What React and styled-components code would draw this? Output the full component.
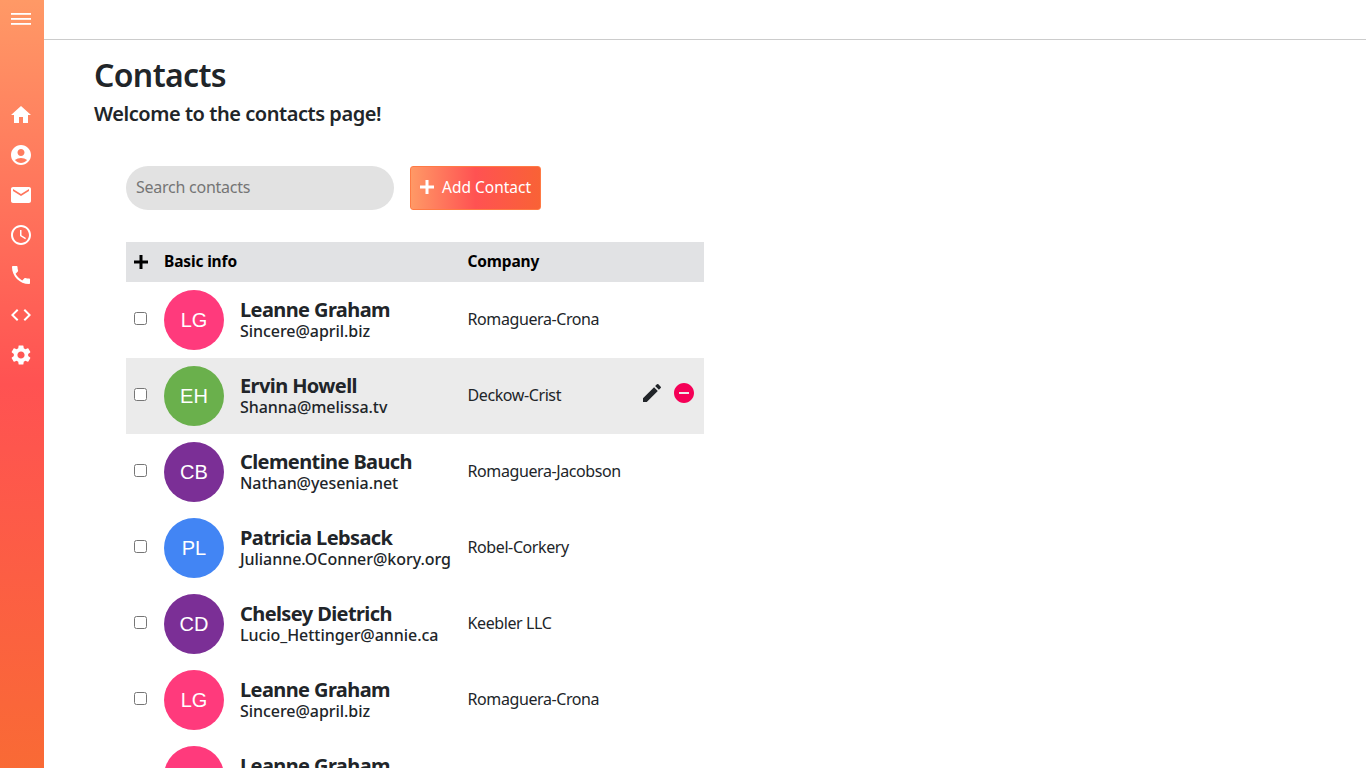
import React from "react";
import styled, { createGlobalStyle } from "styled-components";
import { MdHome, MdAccountCircle, MdEmail, MdAccessTime, MdPhone, MdCode, MdSettings, MdEdit, MdRemoveCircle } from "react-icons/md";

const Global = createGlobalStyle`
  html, body { margin: 0; padding: 0; height: 100%; overflow: hidden; background: #fff; }
  body { font-family: "Noto Sans", "Open Sans", sans-serif; color: #212529; }
`;
const Shell = styled.div`display: flex; height: 768px; overflow: hidden;`;
const Sidebar = styled.nav`
  width: 44px; flex: none; display: flex; flex-direction: column; align-items: center;
  color: #fff;
  background: linear-gradient(to bottom, #ff9966 0%, #ff5252 50%, #f96a35 100%);
`;
const Burger = styled.div`height: 95px; padding-right: 2px; padding-top: 12px; box-sizing: border-box; flex: none; display:flex; align-items:flex-start;`;
const NavItem = styled.a`
  height: 40px; flex: none; display: flex; align-items: center; justify-content: center;
  color: #fff; padding-right: 2px; font-size: 24px;
`;
const Main = styled.div`flex: 1; min-width: 0; display: flex; flex-direction: column;`;
const TopBar = styled.header`height: 39px; flex: none; border-bottom: 1px solid #ccc;`;
const Content = styled.main`padding: 16px 50px 0;`;
const Title = styled.h1`margin: 0 0 8px; font-size: 32px; line-height: 38px; font-weight: 600; color: #212529; letter-spacing: -0.65px;`;
const Subtitle = styled.h5`margin: 0; font-size: 20px; line-height: 24px; font-weight: 600; color: #212529; letter-spacing: -0.45px;`;
const Panel = styled.section`margin: 40px 0 0 32px; width: 578px;`;
const Toolbar = styled.div`display: flex; gap: 16px; align-items: stretch; height: 44px;`;
const Search = styled.input`
  width: 268px; box-sizing: border-box; border: 0; outline: 0; border-radius: 22px; background: #e2e2e2;
  padding: 0 10px 2px; font: 400 16px "Noto Sans", sans-serif; color: #212529; letter-spacing: -0.25px;
  &::placeholder { color: #757575; opacity: 1; }
`;
const AddButton = styled.button`
  width: 131px; box-sizing: border-box; border: 1px solid #ff7a45; border-radius: 3px; padding: 0 0 2px 4px;
  display: flex; align-items: center; gap: 3px; color: #fff;
  font: 400 15.5px "Noto Sans", sans-serif;
  background: linear-gradient(to right, #ff9966 0%, #ff5252 50%, #f96236 100%);
`;
const Table = styled.div`margin-top: 32px;`;
const Row = styled.div`
  display: grid; grid-template-columns: 38px 303.5px 1fr auto; align-items: center;
  height: ${p => p.$head ? 40 : 76}px;
  background: ${p => p.$head ? "#e1e2e4" : p.$hover ? "#ebebeb" : "transparent"};
`;
const HeadCell = styled.div`font-size: 15.5px; font-weight: 700; color: #000; letter-spacing: -0.15px; padding-bottom: 2px;`;
const CheckCell = styled.div`display: flex; justify-content: center; align-items: center; padding: 0 10px 4px 0;`;
const PlusCell = styled.div`display: flex; justify-content: center; color: #000; padding-right: 8px;`;
const Check = styled.input`margin: 0; width: 13px; height: 13px;`;
const Basic = styled.div`display: flex; align-items: center; gap: 16px;`;
const Avatar = styled.div`
  width: 60px; height: 60px; border-radius: 50%; flex: none; background: ${p => p.$color};
  color: #fff; display: flex; align-items: center; justify-content: center;
  font: 400 20px "Liberation Sans", Arial, sans-serif;
`;
const Who = styled.div`display: flex; flex-direction: column; white-space: nowrap; padding-bottom: 2px;`;
const Name = styled.div`font-size: 20px; line-height: 24px; font-weight: 700; letter-spacing: -0.6px; color: #212529;`;
const Email = styled.div`font-size: 16px; line-height: 18px; font-weight: 500; letter-spacing: -0.05px; color: #212529;`;
const Company = styled.div`font-size: 16px; letter-spacing: -0.4px; color: #212529; white-space: nowrap; padding-bottom: 2px;`;
const Actions = styled.div`display: flex; align-items: center; gap: 8px; padding-right: 8px; padding-bottom: 6px;`;
const EditBtn = styled.span`display: flex; font-size: 24px; color: #212529;`;
const RemoveBtn = styled.span`display: flex; font-size: 24px; color: #f50057;`;

const people = [
  ["LG", "#ff3a7c", "Leanne Graham", "Sincere@april.biz", "Romaguera-Crona"],
  ["EH", "#6ab04c", "Ervin Howell", "Shanna@melissa.tv", "Deckow-Crist", true],
  ["CB", "#7b2f96", "Clementine Bauch", "Nathan@yesenia.net", "Romaguera-Jacobson"],
  ["PL", "#4285f4", "Patricia Lebsack", "Julianne.OConner@kory.org", "Robel-Corkery"],
  ["CD", "#7b2f96", "Chelsey Dietrich", "Lucio_Hettinger@annie.ca", "Keebler LLC"],
  ["LG", "#ff3a7c", "Leanne Graham", "Sincere@april.biz", "Romaguera-Crona"],
  ["LG", "#ff3a7c", "Leanne Graham", "Sincere@april.biz", "Romaguera-Crona"],
];

const BoldPlus = () => (
  <svg width="24" height="24" viewBox="0 0 24 24" fill="currentColor">
    <path d="M10.5 5h3v5.5H19v3h-5.5V19h-3v-5.5H5v-3h5.5z" />
  </svg>
);

export default function App() {
  return (
    <Shell>
      <Global />
      <Sidebar>
        <Burger>
          <svg width="20" height="13" viewBox="0 0 20 13" fill="#fff" style={{ marginTop: 1 }}>
            <rect y="0" width="20" height="1.8" />
            <rect y="5" width="20" height="1.8" />
            <rect y="10" width="20" height="1.8" />
          </svg>
        </Burger>
        {[MdHome, MdAccountCircle, MdEmail, MdAccessTime, MdPhone, MdCode, MdSettings].map((I, i) => (
          <NavItem key={i}><I /></NavItem>
        ))}
      </Sidebar>
      <Main>
        <TopBar />
        <Content>
          <Title>Contacts</Title>
          <Subtitle>Welcome to the contacts page!</Subtitle>
          <Panel>
            <Toolbar>
              <Search placeholder="Search contacts" />
              <AddButton><BoldPlus />Add Contact</AddButton>
            </Toolbar>
            <Table>
              <Row $head>
                <PlusCell><BoldPlus /></PlusCell>
                <HeadCell>Basic info</HeadCell>
                <HeadCell>Company</HeadCell>
              </Row>
              {people.map((p, i) => (
                <Row key={i} $hover={p[5]}>
                  <CheckCell><Check type="checkbox" /></CheckCell>
                  <Basic>
                    <Avatar $color={p[1]}>{p[0]}</Avatar>
                    <Who><Name>{p[2]}</Name><Email>{p[3]}</Email></Who>
                  </Basic>
                  <Company>{p[4]}</Company>
                  {p[5] && <Actions><EditBtn><MdEdit /></EditBtn><RemoveBtn><MdRemoveCircle /></RemoveBtn></Actions>}
                </Row>
              ))}
            </Table>
          </Panel>
        </Content>
      </Main>
    </Shell>
  );
}
